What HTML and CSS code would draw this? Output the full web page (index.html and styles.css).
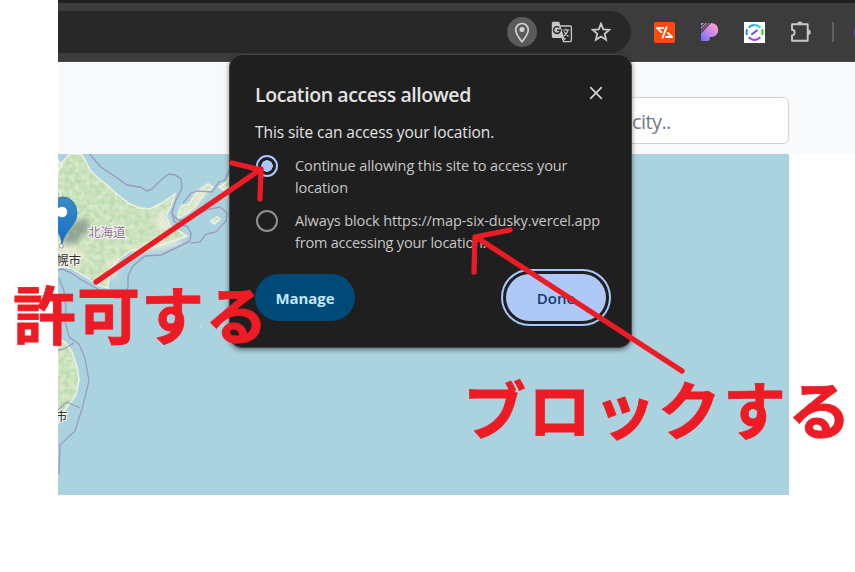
FILE: index.html
```html
<!DOCTYPE html>
<html lang="ja">
<head>
<meta charset="utf-8">
<title>Location permission</title>
<link rel="stylesheet" href="styles.css">
</head>
<body>
<main class="browser">
  <div class="toolbar">
    <div class="omnibox">
      <span class="location-chip"><svg width="30" height="30" viewBox="0 0 30 30"><path d="M15 24.8C11.5 20.5 8.7 16.8 8.7 12.8a6.3 6.3 0 0 1 12.6 0c0 4-2.8 7.7-6.3 12Z" fill="none" stroke="#d2d2d2" stroke-width="1.7"/><circle cx="15" cy="12.6" r="2.5" fill="#d2d2d2"/></svg></span>
      <svg class="translate" width="22" height="22" viewBox="0 0 22 22"><path d="M8 5h11a1.4 1.4 0 0 1 1.4 1.4v12.8a1.4 1.4 0 0 1-1.4 1.4h-6.5L8 5Z" fill="#282828" stroke="#c7c7c7" stroke-width="1.3"/><path d="M2.2.8h6l5 16.1h-11A1.4 1.4 0 0 1 .8 15.5V2.2A1.4 1.4 0 0 1 2.2.8Z" fill="#c7c7c7"/><path d="M12.5 17l-.2 3.6 3-3.6" fill="#c7c7c7"/><path d="M8.3 6.6A3.4 3.4 0 1 0 9.3 9.2H6" fill="none" stroke="#282828" stroke-width="1.4"/><path d="M11.5 9h7M15 7.5V9m2 0c-.7 3-2 4.7-4 6m.2-4.5c1 2.2 2.4 3.5 4.3 5" fill="none" stroke="#c7c7c7" stroke-width="1.2"/></svg>
      <svg class="star" width="20" height="20" viewBox="0 0 20 20"><path d="M10 1.6l2.3 5.7 6 .5-4.6 4 1.4 6-5.1-3.2-5.1 3.2 1.4-6-4.6-4 6-.5Z" fill="none" stroke="#c7c7c7" stroke-width="1.8"/></svg>
    </div>
    <div class="extensions">
      <svg width="21" height="21" viewBox="0 0 21 21"><rect width="21" height="21" rx="2" fill="#ff4a0c"/><path d="M9 6H3l4.2 4M12.5 5.2 8.7 15.5M13.8 11l4.2 4h-6" fill="none" stroke="#fff" stroke-width="2" stroke-linecap="round" stroke-linejoin="round"/></svg>
      <svg width="18" height="18" viewBox="0 0 18 18"><defs><linearGradient id="petal" x1="0" y1="1" x2=".9" y2=".1"><stop stop-color="#6a6cff"/><stop offset=".55" stop-color="#c98ae4"/><stop offset="1" stop-color="#ff9ed1"/></linearGradient></defs><path d="M0 0h10.3a6.9 6.9 0 0 1 0 14H8.7v2.3L7.5 18H0Z" fill="url(#petal)"/><path d="M-.5 4.5 4.2-.5M-.5 7.6 7.2-.5M-.5 10.2 9.7-.5" stroke="#3c3c3c" stroke-width="1.2"/></svg>
      <svg width="21" height="21" viewBox="0 0 21 21"><path fill="#fff" d="M0 0h21v21H0z"/><g fill="none" stroke-width="2"><path d="M3 7.2A8 8 0 0 0 3 13" stroke="#1689f5"/><path d="M4.7 5.5A7.5 7.5 0 0 1 10.5 3" stroke="#159bea"/><path d="M10.5 3a7.5 7.5 0 0 1 5.8 2.5" stroke="#10dca5"/><path d="M18 7.2a8 8 0 0 1 0 5.8" stroke="#20d51e"/><path d="M4.7 15.2a7.5 7.5 0 0 0 11.6 0" stroke="#9b45f2"/><path d="M7.3 12.7 13.5 8" stroke="#6a4de8"/></g></svg>
      <svg width="22" height="22" viewBox="0 0 22 22"><path d="M2 3.2h15.7v16.5H2v-5.3c3.5-.2 3.5-5.5 0-5.7Z" fill="none" stroke="#c7c7c7" stroke-width="1.9" stroke-linejoin="round"/><path d="M7.2 3.2a2.7 2.7 0 0 1 5.4 0ZM18 8.6a2.7 2.7 0 0 1 0 5.4Z" fill="#c7c7c7"/></svg>
      <span class="divider"></span><span class="avatar"></span>
    </div>
  </div>
  <header class="search-row"><div class="search">city..</div></header>
  <section class="map">
    <svg width="731" height="341" viewBox="58 154 731 341">
      <defs><linearGradient id="pin" x2="0" y2="1"><stop stop-color="#3b8ac6"/><stop offset="1" stop-color="#126fc6"/></linearGradient>
      <filter id="soft"><feGaussianBlur stdDeviation="2.5"/></filter>
      <filter id="relief" x="0" y="0" width="1" height="1"><feTurbulence type="fractalNoise" baseFrequency=".2" numOctaves="3" seed="8"/><feColorMatrix values="0 0 0 0 .93 0 0 0 0 .94 0 0 0 0 .86 1 0 0 0 -.3"/><feComposite in2="SourceAlpha" operator="in" result="n"/><feMerge><feMergeNode in="SourceGraphic"/><feMergeNode in="n"/></feMerge></filter></defs>
      <path fill="#aad3df" d="M58 154h731v341H58z"/>
      <g fill="#bddcae" stroke="#eeeedd" stroke-width="1.5" filter="url(#relief)">
        <path d="M70 154h11l4 6 5 10 8 8 10 8 10 9 12 9 10 4 10 1 12-6 13-9-4 12-5 10 4 10 9 5 8 5-10 4-16 5-12 4-18 1-13 10-8 9-2 19-10-3-12-8-15-9-13-1-12-4v-49l12-8 3-11-6-12 1-15Z"/>
        <path d="M178 216l3-10 8-2 8-12 11-8 5 3-9 7-8 12-10 8-7 4ZM211 221l6-4 3 2-6 5ZM219 187l8-5 4-8v10l-7 6Z"/>
        <path d="M58 338l8 5 6 9 5 15 2 13-3 15-7 10-6 7-5 12-1 3Z"/><path d="M58 160l4 5-4 7Z"/>
      </g>
      <g fill="#f1eddc" opacity=".75" filter="url(#soft)"><path d="M58 240l12 1 7 10 11 5-7 6-22 0ZM108 260l10-3-2 24-8-8ZM155 218l8-8 9 17-15 4ZM182 207l8-3 8-13 10-6 3 3-18 21-14 6ZM130 248l14-5 34-3 6 4-24 6-28 3Z"/></g>
      <path d="M58 270l5-1 8 4 9 6 14 8 13 7 9 4 8-1 4-10 0-11 5-10 12-10 16-1 15-7 14-7 1-8-4-7-8-1-5-4-2-9 4-12 6-12-1-9-6-4-6-1-7 5-10 10-5 2-7-4-13-2-14-10-12-8-9-10-10-11" fill="none" stroke="#979bc0" stroke-width="1.4"/>
      <path d="M183 203l8-10 7-2 14 1 7-10 6-2 5-12M191 243l9-1 6-8 10-2 10-11 1-8-7-6-11 2-12 6-10 5-9 0-5-5M59 278l5 13 2 18-1 12 4 16 10 7 6 14 4 23-7 28-7 22-15 14-1 29M58 350l6-1 10-6M58 410l9-8 13 6" fill="none" stroke="#9893b5" stroke-width="1.3" opacity=".85"/>
      <ellipse cx="76" cy="232" rx="17" ry="8" transform="rotate(-45 76 232)" fill="#47515b" opacity=".4" filter="url(#soft)"/>
      <path d="M62 244c-1-14-13-19-13-31a14 16 0 0 1 28 0c0 12-12 17-15 31Z" fill="url(#pin)" stroke="#2d79ae"/><circle cx="62" cy="212" r="5.3" fill="#fff"/><circle cx="61.5" cy="246" r="2" fill="#fff" stroke="#777" stroke-width=".7"/>
      <g class="map-labels"><text class="region" x="88" y="236.5">北海道</text><text class="city" x="56" y="264.5">幌市</text><text class="city" x="55" y="421">市</text></g>
      <circle cx="200.5" cy="326.5" r=".6" fill="#fff"/>
    </svg>
  </section>
</main>
<section class="popup">
  <div class="popup-head"><h1>Location access allowed</h1><svg class="close" width="14" height="14" viewBox="0 0 14 14"><path d="m1.2 1.2 11.6 11.6m0-11.6L1.2 12.8" stroke="#d2d2d2" stroke-width="1.7"/></svg></div>
  <p class="lead">This site can access your location.</p>
  <div class="option"><i class="radio selected"></i><p>Continue allowing this site to access your<br>location</p></div>
  <div class="option second"><i class="radio"></i><p>Always block https://map-six-dusky.vercel.app<br><span class="tight">from accessing your location.</span></p></div>
  <div class="actions"><button class="manage">Manage</button><button class="done">Done</button></div>
</section>
<svg class="arrows" width="855" height="572" viewBox="0 0 855 572"><path d="M96 282 261 169M232 163l29 7-1 29M682 371 476 237M510 230l-35 7-1 35"/></svg>
<div class="note allow">許可する</div>
<div class="note block">ブロックする</div>
</body>
</html>
```
FILE: styles.css
```css
* { box-sizing: border-box; }
body { margin: 0; width: 855px; height: 572px; overflow: hidden; position: relative; background: #fff; font-family: "Open Sans", "Noto Sans", sans-serif; }
svg { display: block; flex: none; }
.browser { margin-left: 58px; }
.toolbar { height: 62px; display: flex; align-items: flex-start; padding-top: 8px; background: #3c3c3c; border-top: 3px solid #1f2020; border-bottom: 1px solid #474747; overflow: hidden; }
.omnibox { flex: none; width: 573px; height: 42px; background: #282828; border-radius: 0 21px 21px 0; display: flex; align-items: center; justify-content: flex-end; padding-right: 20px; }
.location-chip { width: 30px; height: 30px; border-radius: 50%; background: #5b5b5b; margin-right: 14px; }
.translate { margin-right: 18px; }
.extensions { flex: none; height: 42px; display: flex; align-items: center; padding-left: 23px; }
.extensions svg:nth-child(2) { margin-left: 26px; }
.extensions svg:nth-child(3) { margin-left: 25px; }
.extensions svg:nth-child(4) { margin-left: 25px; }
.divider { width: 2px; height: 20px; background: #606060; margin-left: 20px; }
.avatar { width: 24px; height: 24px; border-radius: 50%; background: #7545bb; margin-left: 20px; }
.search-row { height: 92px; background: #f8f9fb; padding-top: 35px; }
.search { width: 331px; height: 47px; margin-left: 400px; background: #fff; border: 1px solid #ced2d7; border-radius: 6px; font-size: 20px; line-height: 48px; letter-spacing: -.6px; color: #747b83; padding-left: 173px; }
.map { width: 731px; height: 341px; }
.map-labels { font-family: "Noto Sans CJK JP", sans-serif; paint-order: stroke; stroke: #f4f5ee; stroke-width: 2px; }
.region { font-size: 12.5px; fill: #93719a; }
.city { font-size: 12.5px; fill: #333; }
.popup { position: absolute; left: 229px; top: 54px; width: 403px; height: 294px; padding: 0 25px; background: #1f1f1f; border: 1px solid #454746; border-radius: 13px; box-shadow: 0 2px 5px #0007; color: #e3e3e3; }
.popup-head { display: flex; justify-content: space-between; padding: 26px 3px 0 0; }
.popup-head h1 { margin: 0; font-size: 19.5px; font-weight: 600; line-height: 27px; letter-spacing: -.41px; white-space: nowrap; }
.close { margin-top: 5px; }
.lead { margin: 13px 0 0; font-size: 15.5px; line-height: 22px; white-space: nowrap; letter-spacing: -.08px; }
.option { display: flex; margin-top: 12px; color: #c7c7c7; }
.option.second { margin-top: 11px; }
.option p { margin: 0; font-size: 14.5px; line-height: 22px; white-space: nowrap; letter-spacing: -.11px; }
.option .tight { letter-spacing: -.2px; }
.radio { width: 22px; height: 22px; border: 2.5px solid #8e918f; border-radius: 50%; margin: 0 17px 0 1px; flex: none; }
.selected { border-color: #a8c7fa; background: radial-gradient(circle, #a8c7fa 0 5.5px, transparent 6px); }
.actions { display: flex; justify-content: space-between; align-items: center; margin-top: 20px; }
.actions button { border: 0; font: 600 15px "Open Sans", sans-serif; height: 47px; border-radius: 24px; padding: 0; }
.actions .manage { width: 100px; background: #004a77; color: #c2e7ff; font-weight: 700; letter-spacing: -.1px; }
.done { width: 100px; background: #aec9f7; color: #123b75; outline: 2px solid #a8c7fa; outline-offset: 3px; }
.arrows { position: absolute; left: 0; top: 0; fill: none; stroke: #ed1c24; stroke-width: 5.3; stroke-linecap: round; stroke-linejoin: round; }
.note { position: absolute; color: #ed1c24; font: 700 63px/80px "Noto Sans CJK JP", sans-serif; -webkit-text-stroke: .8px #ed1c24; white-space: nowrap; }
.allow { left: 13px; top: 272px; letter-spacing: 1px; }
.block { left: 463px; top: 367px; letter-spacing: 2px; }
```
